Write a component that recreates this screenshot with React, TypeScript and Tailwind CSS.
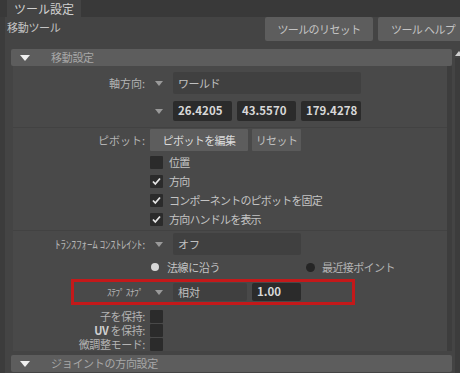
import React from "react";

const FONT = { fontFamily: '"Noto Sans CJK JP", "Noto Sans", sans-serif' };

const Arrow = () => (
  <div className="w-[28px] flex justify-center">
    <div className="w-0 h-0 border-l-[4px] border-r-[4px] border-t-[5px] border-l-transparent border-r-transparent border-t-[#9a9a9a]" />
  </div>
);

const Check = ({ on }: { on?: boolean }) => (
  <div className="w-[13px] h-[13px] bg-[#2b2b2b] rounded-[1px] flex items-center justify-center">
    {on && (
      <svg width="11" height="11" viewBox="0 0 11 11">
        <path d="M2 5.5 L4.3 8 L9 2.5" stroke="#e6e6e6" strokeWidth="1.8" fill="none" />
      </svg>
    )}
  </div>
);

const Label = ({ children, small }: { children: React.ReactNode; small?: boolean }) => (
  <div
    className={`w-[132px] shrink-0 text-right text-[#b4b4b4] whitespace-nowrap ${
      small ? "text-[11px] tracking-[-0.2px]" : "text-[11px]"
    }`}
  >
    {children}
  </div>
);

const Header = ({ title }: { title: string }) => (
  <div className="h-[17px] bg-[#5d5d5d] rounded-[2px] flex items-center overflow-hidden">
    <div className="ml-[9px] w-0 h-0 border-l-[5px] border-r-[5px] border-t-[6px] border-l-transparent border-r-transparent border-t-[#f0f0f0]" />
    <span className="ml-[21px] text-[11px] leading-none text-[#a8a8a8] tracking-[-0.3px]">{title}</span>
  </div>
);

const CheckRow = ({ on, text }: { on?: boolean; text: string }) => (
  <div className="h-[19px] flex items-center pl-[137px] gap-[6px]">
    <Check on={on} />
    <span className="text-[11px] text-[#c4c4c4] tracking-[-0.8px]">{text}</span>
  </div>
);

const NumField = ({ v, w }: { v: string; w: string }) => (
  <div
    className={`${w} h-[20px] bg-[#2b2b2b] rounded-[2px] flex items-center px-[5px] text-[11.5px] text-[#d8d8d8] font-semibold`}
  >
    {v}
  </div>
);

export default function App() {
  return (
    <div className="w-[460px] h-[373px] bg-[#444444] overflow-hidden flex flex-col" style={FONT}>
      <div className="h-[17px] shrink-0 bg-[#393939] flex">
        <div className="ml-[7px] w-[74px] bg-[#444444] flex items-center justify-center text-[12px] text-[#d0d0d0]">
          ツール設定
        </div>
      </div>
      <div className="flex-1 flex border-l-[5px] border-[#3c3c3c]">
        <div className="w-[1px] bg-[#363636]" />
        <div className="flex-1 flex flex-col">
          <div className="h-[27px] flex">
            <span className="ml-[2px] mt-[2px] text-[11px] text-[#c4c4c4] tracking-[-0.3px]">移動ツール</span>
            <div className="ml-auto flex gap-[5px] h-[24px] -mr-[16px]">
              <div className="w-[108px] h-[24px] bg-[#5d5d5d] rounded-[2px] flex items-center justify-center text-[11px] text-[#c4c4c4] tracking-[-0.6px]">
                ツールのリセット
              </div>
              <div className="w-[100px] h-[24px] bg-[#5d5d5d] rounded-[2px] flex items-center pl-[13px] text-[11px] text-[#c4c4c4] whitespace-nowrap tracking-[-0.6px]">
                ツール ヘルプ
              </div>
            </div>
          </div>
          <div className="flex-1 flex mt-[5px]">
            <div className="flex-1 pl-[6px] flex flex-col">
              <Header title="移動設定" />
              <div className="flex">
                <div className="w-[434px] ml-[2px] bg-[#494949] flex flex-col pt-[6px] h-[285px]">
                  <div className="h-[22px] flex items-center">
                    <Label>軸方向:</Label>
                    <Arrow />
                    <div className="w-[188px] h-[22px] bg-[#404040] rounded-[2px] flex items-center px-[5px] text-[11px] text-[#c0c0c0] tracking-[-0.5px]">
                      ワールド
                    </div>
                  </div>
                  <div className="h-[20px] mt-[7px] flex items-center">
                    <div className="w-[132px]" />
                    <Arrow />
                    <div className="flex gap-[5px]">
                      <NumField v="26.4205" w="w-[59px]" />
                      <NumField v="43.5570" w="w-[59px]" />
                      <NumField v="179.4278" w="w-[60px]" />
                    </div>
                  </div>
                  <div className="h-[1px] bg-[#424242] mt-[6px]" />
                  <div className="h-[22px] mt-[1px] flex items-center">
                    <Label>ピボット:</Label>
                    <div className="ml-[5px] w-[98px] h-[22px] bg-[#5d5d5d] flex items-center justify-center text-[11px] text-[#dcdcdc] rounded-[1px] tracking-[-0.6px]">
                      ピボットを編集
                    </div>
                    <div className="ml-[4px] w-[49px] h-[22px] bg-[#5a5a5a] flex items-center justify-center text-[11px] text-[#c0c0c0] rounded-[1px] tracking-[-0.6px]">
                      リセット
                    </div>
                  </div>
                  <div className="mt-[2px]">
                    <CheckRow text="位置" />
                    <CheckRow on text="方向" />
                    <CheckRow on text="コンポーネントのピボットを固定" />
                    <CheckRow on text="方向ハンドルを表示" />
                  </div>
                  <div className="h-[1px] bg-[#424242] mt-[1px]" />
                  <div className="h-[22px] mt-[2px] flex items-center">
                    <Label small>ﾄﾗﾝｽﾌｫｰﾑ ｺﾝｽﾄﾚｲﾝﾄ:</Label>
                    <Arrow />
                    <div className="w-[128px] h-[22px] bg-[#404040] rounded-[2px] flex items-center px-[5px] text-[11px] text-[#c0c0c0]">
                      オフ
                    </div>
                  </div>
                  <div className="h-[24px] flex items-center">
                    <div className="ml-[138px] w-[8px] h-[8px] rounded-full bg-[#d8d8d8]" />
                    <span className="ml-[8px] text-[11px] text-[#c4c4c4] tracking-[-0.4px]">法線に沿う</span>
                    <div className="ml-[86px] w-[9px] h-[9px] rounded-full bg-[#252525]" />
                    <span className="ml-[7px] text-[11px] text-[#b4b4b4] tracking-[-0.6px]">最近接ポイント</span>
                  </div>
                  <div className="ml-[58px] w-[284px] h-[26px] border-[3px] border-[#c4191a] flex items-center">
                    <div className="w-[69px] text-right text-[9.5px] text-[#b4b4b4] tracking-[-0.6px] whitespace-nowrap">
                      ｽﾃﾌﾟ ｽﾅﾌﾟ
                    </div>
                    <div className="w-[2px]" />
                    <Arrow />
                    <div className="w-[74px] h-[18px] bg-[#404040] rounded-[2px] flex items-center px-[5px] text-[11px] text-[#c0c0c0]">
                      相対
                    </div>
                    <div className="ml-[5px] w-[49px] h-[18px] bg-[#2b2b2b] rounded-[2px] flex items-center px-[5px] text-[11.5px] text-[#d8d8d8] font-semibold">
                      1.00
                    </div>
                  </div>
                  <div className="mt-[4px] flex flex-col">
                    {["子を保持:", "UV を保持:", "微調整モード:"].map((t) => (
                      <div key={t} className="h-[14px] flex items-center">
                        <div className="w-[132px] text-right text-[11px] text-[#b4b4b4] leading-[14px] tracking-[-0.4px] whitespace-nowrap">
                          {t.startsWith("UV") ? (
                            <>
                              <b className="font-bold text-[#d0d0d0]">UV</b> を保持:
                            </>
                          ) : (
                            t
                          )}
                        </div>
                        <div className="ml-[5px]">
                          <div className="w-[13px] h-[13px] bg-[#2b2b2b] rounded-[1px]" />
                        </div>
                      </div>
                    ))}
                  </div>
                </div>
                <div className="w-[5px] bg-[#3d3d3d]" />
              </div>
              <div className="mt-[4px]">
                <Header title="ジョイントの方向設定" />
              </div>
            </div>
            <div className="w-[8px] ml-[2px] flex flex-col">
              <div className="w-0 h-0 mt-[2px] ml-[1px] border-l-[4px] border-r-[4px] border-b-[5px] border-l-transparent border-r-transparent border-b-[#cfcfcf]" />
              <div className="flex-1 mt-[2px] bg-[#3c3c3c] w-[6px] ml-[1px]" />
            </div>
          </div>
        </div>
      </div>
    </div>
  );
}
